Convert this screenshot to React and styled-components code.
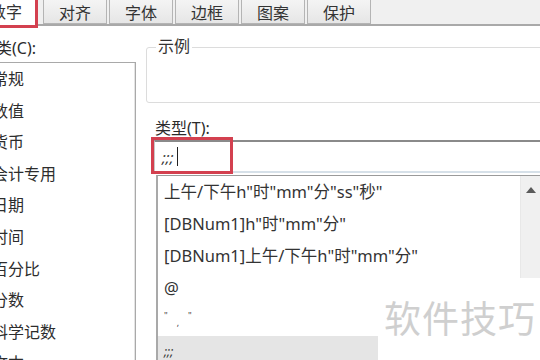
import React from 'react';
import styled, { createGlobalStyle } from "styled-components";

const GlobalStyle = createGlobalStyle`
  html, body { margin: 0; padding: 0; background: #ffffff; }
  body {
    font-family: "Noto Sans", "Noto Sans CJK SC", sans-serif;
    color: #2b2b2b;
  }
`

const tabs = ["数字", "对齐", "字体", "边框", "图案", "保护"];
const categories = ["常规", "数值", "货币", "会计专用", "日期", "时间", "百分比", "分数", "科学记数", "文本"];

function App() {
    return (
        <>
            <GlobalStyle/>
            <Frame>
                <TabBar>
                    {tabs.map((t, i) => (
                        <Tab key={t} $active={i === 0}>{t}</Tab>
                    ))}
                </TabBar>
                <Body>
                    <LeftCol>
                        <Label>类(C):</Label>
                        <CategoryList>
                            {categories.map(c => <CategoryItem key={c}>{c}</CategoryItem>)}
                        </CategoryList>
                    </LeftCol>
                    <RightCol>
                        <SampleBox>
                            <Legend>示例</Legend>
                        </SampleBox>
                        <TypeLabel>类型(T):</TypeLabel>
                        <TypeInput>
                            <InputText>;;;</InputText>
                            <Caret/>
                            <Highlight/>
                        </TypeInput>
                        <FormatList>
                            <FormatItems>
                                <FormatItem>上午/下午h"时"mm"分"ss"秒"</FormatItem>
                                <FormatItem>[DBNum1]h"时"mm"分"</FormatItem>
                                <FormatItem>[DBNum1]上午/下午h"时"mm"分"</FormatItem>
                                <FormatItem>@</FormatItem>
                                <FormatItem $small>
                                    <Quote>"</Quote><Comma>,</Comma><Quote>"</Quote>
                                </FormatItem>
                                <FormatItem $selected $small>;;;</FormatItem>
                            </FormatItems>
                            <ScrollBar>
                                <svg width="10" height="6" viewBox="0 0 10 6">
                                    <path d="M0 6 L5 0 L10 6 Z" fill="#5a5a5a"/>
                                </svg>
                            </ScrollBar>
                        </FormatList>
                    </RightCol>
                </Body>
                <Watermark>软件技巧</Watermark>
            </Frame>
        </>
    );
}

export default App;

//#region Styling

const Frame = styled.div`
  position: relative;
  width: 540px;
  height: 360px;
  overflow: hidden;
  background: #ffffff;
`

const TabBar = styled.div`
  display: flex;
  height: 24px;
  margin-left: -26px;
  background: #f0f0f0;
  border-bottom: 2px solid #a9a9a9;
  gap: 2px;
`

const Tab = styled.div`
  box-sizing: border-box;
  width: 64px;
  height: ${p => p.$active ? "28px" : "24px"};
  display: flex;
  align-items: center;
  justify-content: center;
  font-size: 16px;
  color: #333;
  background: ${p => p.$active ? "#ffffff" : "linear-gradient(#f4f4f4, #e6e6e6)"};
  border: ${p => p.$active ? "3px solid #d3404f" : "1px solid #b4b4b4"};
  border-top: none;
  margin-right: ${p => p.$active ? "3px" : "0"};
  position: relative;
  z-index: ${p => p.$active ? 2 : 1};
  padding-bottom: ${p => p.$active ? "4px" : "0"};
`

const Body = styled.div`
  display: flex;
  margin-left: -12px;
  padding-top: 12px;
`

const LeftCol = styled.div`
  width: 148px;
  flex-shrink: 0;
`

const Label = styled.div`
  font-size: 16px;
  line-height: 20px;
  padding-left: 8px;
  height: 22px;
`

const CategoryList = styled.div`
  margin-top: 2px;
  height: 330px;
  border: 1px solid #a9a9a9;
  border-left: none;
  box-shadow: inset -1px 0 0 #e4e4e4;
  padding-top: 1px;
  box-sizing: border-box;
`

const CategoryItem = styled.div`
  height: 31.6px;
  line-height: 31.6px;
  font-size: 16px;
  padding-left: 4px;
  color: #2d2d2d;
`

const RightCol = styled.div`
  flex: 1;
  min-width: 0;
  padding-left: 10px;
`

const SampleBox = styled.div`
  position: relative;
  height: 56px;
  margin-top: 9px;
  margin-right: -10px;
  border: 1px solid #dcdcdc;
  border-radius: 3px;
  box-sizing: border-box;
`

const Legend = styled.span`
  position: absolute;
  top: -12px;
  left: 9px;
  padding: 0 2px;
  background: #ffffff;
  font-size: 16px;
  line-height: 20px;
  color: #333;
`

const TypeLabel = styled.div`
  margin-top: 15px;
  margin-left: 9px;
  font-size: 16px;
  line-height: 20px;
  height: 20px;
`

const TypeInput = styled.div`
  position: relative;
  box-sizing: border-box;
  margin-top: 2px;
  margin-left: 8px;
  margin-right: -10px;
  height: 33px;
  border-top: 2px solid #8a8a8a;
  border-left: 1px solid #c8c8c8;
  border-bottom: 2px solid #d6e0e8;
  display: flex;
  align-items: center;
  padding-left: 7px;
`

const InputText = styled.span`
  font-size: 15px;
  font-style: italic;
  letter-spacing: 0;
  color: #333;
`

const Caret = styled.span`
  width: 1px;
  height: 19px;
  background: #222;
  margin-left: 3px;
`

const Highlight = styled.div`
  position: absolute;
  left: -4px;
  top: -5px;
  width: 82px;
  height: 37px;
  border: 3px solid #d3404f;
  box-sizing: border-box;
`

const FormatList = styled.div`
  display: flex;
  margin-top: 2px;
  margin-left: 10px;
  height: 200px;
  border-top: 1px solid #9a9a9a;
  border-left: 2px solid #a9a9a9;
`

const FormatItems = styled.div`
  flex: 1;
  min-width: 0;
`

const FormatItem = styled.div`
  height: 32px;
  line-height: 32px;
  padding-left: 6px;
  font-size: ${p => p.$small ? "12px" : "16.5px"};
  font-style: ${p => p.$selected ? "italic" : "normal"};
  background: ${p => p.$selected ? "#e5e5e5" : "transparent"};
  color: #333;
  white-space: nowrap;
  display: flex;
  align-items: center;
`

const Quote = styled.span`
  font-size: 9px;
  color: #444;
  margin-top: -8px;
`

const Comma = styled.span`
  margin: 0 9px;
  font-size: 9px;
  color: #444;
  margin-top: 6px;
`

const ScrollBar = styled.div`
  width: 20px;
  background: #f0f0f0;
  border-left: 1px solid #e8e8e8;
  display: flex;
  justify-content: center;
  padding-top: 11px;
  box-sizing: border-box;
`

const Watermark = styled.div`
  position: absolute;
  left: 378px;
  top: 278px;
  width: 162px;
  height: 82px;
  background: #ffffff;
  font-family: "Noto Sans CJK SC", sans-serif;
  font-size: 37px;
  color: #cfcfcf;
  padding-left: 6px;
  padding-top: 17px;
  box-sizing: border-box;
  letter-spacing: 1px;
  line-height: 44px;
`

//#endregion
